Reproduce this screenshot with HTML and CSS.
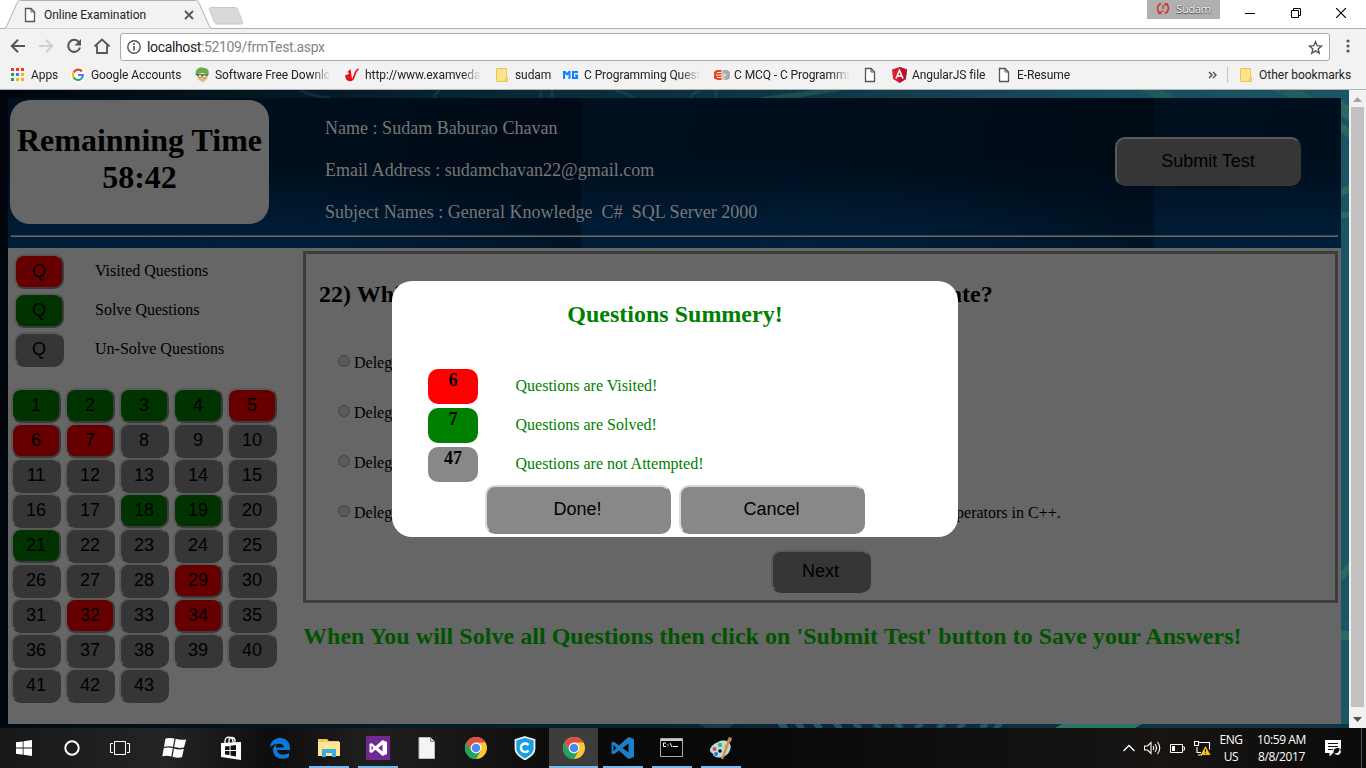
FILE: index.html
```html
<!DOCTYPE html>
<html lang="en">
<head>
<meta charset="utf-8">
<title>Online Examination</title>
<link rel="stylesheet" href="styles.css">
</head>
<body>
<svg class="defs" width="0" height="0" aria-hidden="true">
  <symbol id="doc" viewBox="0 0 12 16"><path d="M1.5 1.5h5.500l3.500 3.500v9.500h-9z" fill="#fff" stroke="#555" stroke-width="1.300"/><path d="M7 1.500v3.500h3.500" fill="none" stroke="#555"/></symbol>
  <symbol id="folder" viewBox="0 0 16 16"><path d="M1.500 1.500h10v9.500h1v3.500h-11z" fill="#ffe48c" stroke="#e9c552"/><path d="M10.500 14.500v-3h2" fill="none" stroke="#e9c552"/></symbol>
  <symbol id="chrome" viewBox="0 0 24 24"><circle cx="12" cy="12" r="11" fill="#fcc934"/><path d="M2.470 6.500A11 11 0 0 0 12 23l4.800-8.300L12 12 7.200 14.700z" fill="#1da462"/><path d="M12 6.500h9.530A11 11 0 0 0 2.470 6.500L7.200 14.700z" fill="#dd4f43"/><circle cx="12" cy="12" r="5.400" fill="#fff"/><circle cx="12" cy="12" r="4.300" fill="#4a8af4"/></symbol>
</svg>

<header class="browser">
  <div class="tabstrip">
    <svg class="tabshape" width="250" height="29" viewBox="0 0 250 29"><path d="M0 28.500h3.500q2.500 0 3.500-3L17 3q1-2.500 3.500-2.500h175q2.500 0 3.500 2.500l10 22.500q1 3 3.500 3H250" fill="#f2f2f2" stroke="#b0b0b0"/><path d="M210.500 7.500h25q1.500 0 2 1.500l5 13q.500 2-1.500 2h-24q-2 0-2.500-1.500l-5-13q-.500-2 1-2z" fill="#d9d9d9" stroke="#c8c8c8"/></svg>
    <div class="tab"><svg width="12" height="16"><use href="#doc"/></svg><span>Online Examination</span><svg class="close" width="10" height="10"><path d="M1 1l8 8M9 1l-8 8" stroke="#555" stroke-width="1.800"/></svg></div>
    <div class="profile"><svg width="14" height="13" viewBox="0 0 14 13"><path d="M5 1.500C.500 3 .500 9 4.500 11.500M9 1.500c4.500 1.500 4.500 7.500 0 10" fill="none" stroke="#c8382e" stroke-width="1.600"/><path d="M1.500 12h4V8.500zM12.500 1h-4v3.500z" fill="#c8382e"/><path d="M7 3v4M7 8.500v1.500" stroke="#c8382e" stroke-width="1.400"/></svg><span>Sudam</span></div>
    <div class="winctl">
      <svg width="10" height="10"><path d="M0 5.500h10" stroke="#000"/></svg>
      <svg width="10" height="10"><path d="M.500 2.500h7v7h-7zM2.500 2.500v-2h7v7h-2" fill="none" stroke="#000"/></svg>
      <svg width="10" height="10"><path d="M0 0l10 10M10 0L0 10" stroke="#000" stroke-width="1.200"/></svg>
    </div>
  </div>
  <div class="toolbar">
    <div class="nav">
      <svg width="16" height="16" viewBox="0 0 16 16"><path d="M15 8H2.500M8 1.800L1.800 8 8 14.200" fill="none" stroke="#555" stroke-width="2"/></svg>
      <svg width="16" height="16" viewBox="0 0 16 16"><path d="M1 8h12.500M8 1.800L14.200 8 8 14.200" fill="none" stroke="#d0d0d0" stroke-width="2"/></svg>
      <svg width="16" height="16" viewBox="0 0 16 16"><path d="M13 4.200A6 6 0 1 0 14 9.500" fill="none" stroke="#555" stroke-width="2"/><path d="M15 1v6.500H8.500z" fill="#555"/></svg>
      <svg class="home" width="18" height="16" viewBox="0 0 18 16"><path d="M1.500 8.500L9 1.500l7.500 7M4 7.500V15h10V7.500" fill="none" stroke="#555" stroke-width="1.800"/></svg>
    </div>
    <div class="omnibox">
      <svg width="14" height="14" viewBox="0 0 14 14"><circle cx="7" cy="7" r="6.200" fill="none" stroke="#555" stroke-width="1.400"/><path d="M7 6v4.500M7 3.200v1.700" stroke="#555" stroke-width="1.700"/></svg>
      <span class="url">localhost<i>:52109/frmTest.aspx</i></span>
      <svg class="star" width="15" height="15" viewBox="0 0 15 15"><path d="M7.500 1.700l1.700 4 4.300.400-3.300 2.800 1 4.300-3.700-2.300-3.700 2.300 1-4.300L1.500 6.100l4.300-.400z" fill="none" stroke="#555" stroke-width="1.400"/></svg>
    </div>
    <svg class="menu" width="4" height="14"><circle cx="2" cy="2" r="1.600" fill="#555"/><circle cx="2" cy="7" r="1.600" fill="#555"/><circle cx="2" cy="12" r="1.600" fill="#555"/></svg>
  </div>
  <div class="bookmarks">
    <div class="bm"><svg width="16" height="16" viewBox="0 0 16 16"><path d="M0 1h3v3H0z M5 1h3v3H5zM10 1h3v3h-3z" fill="#e8392b"/><path d="M0 6h3v3H0zM0 11h3v3H0z" fill="#2a9d4f"/><path d="M5 6h3v3H5z" fill="#3b7ded"/><path d="M10 6h3v3h-3zM5 11h3v3H5zM10 11h3v3h-3z" fill="#f6b60c"/></svg><span>Apps</span></div>
    <div class="bm"><svg width="16" height="16" viewBox="0 0 16 16"><circle cx="7" cy="8" r="7.500" fill="#fff"/><g fill="none" stroke-width="2.200"><path d="M11 4.500A5 5 0 0 0 2.600 5.500" stroke="#ea4335"/><path d="M2.600 5.500a5 5 0 0 0 0 5" stroke="#fbbc05"/><path d="M2.600 10.500a5 5 0 0 0 7.700 1.200" stroke="#34a853"/><path d="M10.300 11.700A5 5 0 0 0 12 8H7" stroke="#4285f4"/></g></svg><span>Google Accounts</span></div>
    <div class="bm"><svg width="16" height="16" viewBox="0 0 16 16"><path d="M2 8h11l-1 4-4 3.500L3.500 13z" fill="#f2b878"/><path d="M1 7C0 2 5-.500 9 1c4 0 6 4 4 7L8 6z" fill="#6fa84e"/><path d="M0 6.500l14 1-2 1.500H2z" fill="#4d7a42"/><circle cx="5" cy="9" r="1.500" fill="#fff" stroke="#4d7a42" stroke-width=".700"/><circle cx="9.500" cy="9.500" r="1.500" fill="#fff" stroke="#4d7a42" stroke-width=".700"/></svg><span>Software Free Downloads</span></div>
    <div class="bm"><svg width="16" height="16" viewBox="0 0 16 16"><path d="M5.500 2L2.500 5l2 1.500L0 8.500l1 3.500c2 3 6 3 6 0z" fill="#e8121a"/><path d="M5 13.500c6 0 3-9 8.500-11.500" fill="none" stroke="#e8121a" stroke-width="1.700"/></svg><span>http://www.examveda.com</span></div>
    <div class="bm"><svg width="16" height="16"><use href="#folder"/></svg><span>sudam</span></div>
    <div class="bm"><svg class="mg" width="16" height="16" viewBox="0 0 16 16"><path d="M1 12V5h1l2 2.500L6 5h.500v7M15 5H10v6h4V8.500h-2" fill="none" stroke="#0a84ff" stroke-width="2"/></svg><span>C Programming Questions</span></div>
    <div class="bm"><svg width="16" height="16" viewBox="0 0 16 16"><path d="M7.500 3H4a5 5 0 0 0 0 10h3.500z" fill="#e5481c"/><path d="M8.500 3H12a5 5 0 0 1 0 10H8.500z" fill="#aaa"/><path d="M2 8h5.500M3 5.500h4.500M3 10.500h4.500M10 8h3M10 6v7" stroke="#f3e4de"/></svg><span>C MCQ - C Programming</span></div>
    <div class="bm"><svg width="12" height="16"><use href="#doc"/></svg></div>
    <div class="bm"><svg width="16" height="16" viewBox="0 0 16 16"><path d="M7.500 0L15 2.600 13.800 12 7.500 16 1.200 12 0 2.600z" fill="#dd1b33"/><path d="M7.500 0L15 2.600 13.800 12 7.500 16z" fill="#b3122c"/><path d="M4 11.500L7.500 3.500l3.500 8M5.500 9h4" fill="none" stroke="#fff" stroke-width="1.600"/></svg><span>AngularJS file</span></div>
    <div class="bm"><svg width="16" height="16"><use href="#doc" width="12" height="16" x="1"/></svg><span>E-Resume</span></div>
    <div class="bmright"><svg width="9" height="8" viewBox="0 0 9 8"><path d="M1 1l3 3-3 3M5 1l3 3-3 3" fill="none" stroke="#555" stroke-width="1.500"/></svg><b></b><svg width="16" height="16"><use href="#folder"/></svg><span>Other bookmarks</span></div>
  </div>
</header>

<div class="viewport">
  <svg class="backdrop" width="1349" height="638">
    <g fill="none" stroke="#2b7580" stroke-opacity=".22">
      <path d="M300 0q10 6 30 8M440 0q-6 4-5 8M541 0v8M552 0v8M615 0q10 3 20 8M700 0q-8 4-10 8M716 0v8" stroke-width="3"/>
      <path d="M1341 82l8-1M1341 136l8 1M1341 534l8-1" stroke-width="2"/>
    </g>
    <path d="M755 8l60-8h30l-50 8zM1140 0h22l14 8h-20zM1270 0h30l14 8h-22z" fill="#246a58" fill-opacity=".5"/>
    <path d="M1341 10l8 6v15l-8-5zM1341 32l8 6v10l-8-6zM1341 98l8-3v8l-8 3zM1341 122h8v6h-8zM1341 482l8-10v12l-8 7zM1341 541h8v9h-8z" fill="#2d7260" fill-opacity=".75"/>
    <path d="M0 634h1349v4H0z" fill="#04131d" fill-opacity=".45"/>
    <path d="M780 638l6-4M798 638l4-4M816 638l4-4M836 638l4-4M856 638l3-4M876 638l2-4M898 638l2-4M920 638l-2-4M942 638l-2-4M962 638l-2-4M985 638l-2-4M1000 638l-4-4" stroke="#1d566a" stroke-width="8"/>
    <path d="M1055 638l7-4h80l-7 4z" fill="#2d7468"/><path d="M698 634h36l-5 4h-24z" fill="#163c4a"/>
  </svg>
  <main class="page">
    <section class="banner">
      <div class="banner-row">
        <h1 class="timer">Remainning Time<br>58:42</h1>
        <div class="person"><p>Name : Sudam Baburao Chavan</p><p>Email Address : sudamchavan22@gmail.com</p><p>Subject Names : General Knowledge&nbsp; C#&nbsp; SQL Server 2000</p></div>
        <button class="btn dim wide">Submit Test</button>
      </div>
      <div class="rule"></div>
    </section>
    <div class="body">
      <aside>
        <div class="legend">
          <button class="btn dim q red">Q</button><span>Visited Questions</span>
          <button class="btn dim q green">Q</button><span>Solve Questions</span>
          <button class="btn dim q">Q</button><span>Un-Solve Questions</span>
        </div>
        <div class="numbers">
          <button class="btn dim q green">1</button><button class="btn dim q green">2</button><button class="btn dim q green">3</button><button class="btn dim q green">4</button><button class="btn dim q red">5</button>
          <button class="btn dim q red">6</button><button class="btn dim q red">7</button><button class="btn dim q">8</button><button class="btn dim q">9</button><button class="btn dim q">10</button>
          <button class="btn dim q">11</button><button class="btn dim q">12</button><button class="btn dim q">13</button><button class="btn dim q">14</button><button class="btn dim q">15</button>
          <button class="btn dim q">16</button><button class="btn dim q">17</button><button class="btn dim q green">18</button><button class="btn dim q green">19</button><button class="btn dim q">20</button>
          <button class="btn dim q green">21</button><button class="btn dim q">22</button><button class="btn dim q">23</button><button class="btn dim q">24</button><button class="btn dim q">25</button>
          <button class="btn dim q">26</button><button class="btn dim q">27</button><button class="btn dim q">28</button><button class="btn dim q red">29</button><button class="btn dim q">30</button>
          <button class="btn dim q">31</button><button class="btn dim q red">32</button><button class="btn dim q">33</button><button class="btn dim q red">34</button><button class="btn dim q">35</button>
          <button class="btn dim q">36</button><button class="btn dim q">37</button><button class="btn dim q">38</button><button class="btn dim q">39</button><button class="btn dim q">40</button>
          <button class="btn dim q">41</button><button class="btn dim q">42</button><button class="btn dim q">43</button>
        </div>
      </aside>
      <section class="content">
        <div class="panel">
          <h2>22) Which of the following statements are correct about delegate?</h2>
          <div class="options">
            <label><i></i>Delegates are object oriented.</label>
            <label><i></i>Delegates are type-safe.</label>
            <label><i></i>Delegates can be used to call a static method.</label>
            <label><i></i>Delegates serve the same purpose as function pointers in C and pointers to member function operators in C++.</label>
          </div>
          <button class="btn dim next">Next</button>
        </div>
        <h2 class="hint">When You will Solve all Questions then click on 'Submit Test' button to Save your Answers!</h2>
      </section>
    </div>
  </main>
  <div class="scroll"><svg width="9" height="5"><path d="M0 5l4.500-5L9 5z" fill="#a3a3a3"/></svg><div class="thumb"></div><svg width="9" height="5"><path d="M0 0l4.500 5L9 0z" fill="#505050"/></svg></div>
  <div class="modal">
    <h2>Questions Summery!</h2>
    <div class="summary">
      <b class="red">6</b><span>Questions are Visited!</span>
      <b class="green">7</b><span>Questions are Solved!</span>
      <b>47</b><span>Questions are not Attempted!</span>
    </div>
    <div class="actions"><button class="btn wide">Done!</button><button class="btn wide">Cancel</button></div>
  </div>
</div>

<footer class="taskbar">
  <div class="cell sys"><svg width="16" height="16" viewBox="0 0 16 16"><path d="M0 2.300L6.700 1.400V7.600H0zM7.500 1.300L16 0v7.600H7.500zM0 8.400h6.700v6.300L0 13.700zM7.500 8.400H16V16l-8.500-1.200z" fill="#fff"/></svg></div>
  <div class="cell sys"><svg width="16" height="16"><circle cx="8" cy="8" r="6.700" fill="none" stroke="#fff" stroke-width="2"/></svg></div>
  <div class="cell sys"><svg width="20" height="14"><path d="M4.500.500h11v13h-11zM3 2.500H.500v9H3M17 2.500h2.500v9H17" fill="none" stroke="#fff"/></svg></div>
  <div class="cell flag"><svg width="26" height="22" viewBox="0 0 26 22"><path d="M4.500 1.500q4-1 9 0l-1.500 8.300q-4-1-9 0zM14.700 1.800q4 1.500 10.500.700L23 10.500q-5 1-9.800-.400zM2.800 11q4-1 9 0l-1.500 8.500q-4-1.500-9-.300zM13 11.500q4 1.500 9.800.500L21 20.300q-5 1-9.500-.500z" fill="#fff"/></svg></div>
  <div class="cell"><svg width="22" height="24" viewBox="0 0 22 24"><path d="M5 8V5c0-5 7-5 8 0v2M9 7V4c1-4 6-3 6 1v3" fill="none" stroke="#fff" stroke-width="1.300"/><path d="M1 7l20-1v18L1 21z" fill="#fff"/><path d="M5 10.500l4.500-.600v4H5zM10.500 9.800l5.500-.800v5h-5.500zM5 15h4.500v4L5 18.500zM10.500 15H16v5.500l-5.500-.900z" fill="#111"/></svg></div>
  <div class="cell"><svg width="22" height="22" viewBox="0 0 22 22"><path d="M1 10C2 3.500 6.500 1 11 1c6 0 10 4 10 10v2H8c.500 5 7 6 12 3v4c-7 4-16 1-16-7 0-3 2-5 5-6-2 1.500-2 2.500-2 3.500h8c0-5-8-5-14-.500z" fill="#0b79d8"/></svg></div>
  <div class="cell open"><svg width="22" height="18" viewBox="0 0 22 18"><path d="M0 0h9l2 2h10v15H0z" fill="#f4c85c"/><path d="M0 3h22v14H0z" fill="#ffe594"/><path d="M4 18V10h14v8h-4v-4H8v4z" fill="#35aee8"/></svg></div>
  <div class="cell open"><svg width="24" height="24" viewBox="0 0 24 24"><path d="M0 0h24v24H0z" fill="#6e2a91"/><path fill-rule="evenodd" d="M16.500 4L21 6v12l-4.500 2-7-6.200L5.500 17 3.500 16V8l2-1 4 3.200zM16.500 8.500L12.300 12l4.200 3.500zM5.500 9.800v4.400L7.500 12z" fill="#fff"/></svg></div>
  <div class="cell"><svg width="18" height="22" viewBox="0 0 18 22"><path d="M1 .500h11.500l4 4V21.500H1z" fill="#f4f4f4" stroke="#bbb"/><path d="M12.500.500v4h4" fill="#ccc" stroke="#888"/></svg></div>
  <div class="cell"><svg width="24" height="24"><use href="#chrome"/></svg></div>
  <div class="cell"><svg width="22" height="24" viewBox="0 0 22 24"><path d="M11 1l9.500 3v9c0 5-5 8-9.500 10.500C6.500 21 1.500 18 1.500 13V4z" fill="#18a0e0" stroke="#e8eef2" stroke-width="1.800"/><path d="M14.500 9A4.300 4.300 0 1 0 14.500 14.500" fill="none" stroke="#fff" stroke-width="2.400"/></svg></div>
  <div class="cell open active"><svg width="24" height="24"><use href="#chrome"/></svg></div>
  <div class="cell open"><svg width="24" height="24" viewBox="0 0 24 24"><path fill-rule="evenodd" d="M17.500 1L23 3v18l-5.500 2L8 14.500 2.500 18.500.500 17.300V6.700l2-1.200L8 9.500zM17.500 7.500L11.500 12l6 4.500zM2.500 9v6L5.500 12z" fill="#1b80c9"/></svg></div>
  <div class="cell open"><svg width="24" height="20" viewBox="0 0 24 20"><path d="M.500.500h22v18h-22z" fill="#050505" stroke="#aaa"/><path d="M1 2h21" stroke="#ccc" stroke-width="2"/><path d="M6 5H3.500v3.500H6M8 6v.800M8 7.700v.800M10 5l2 4M13 8.500h5" fill="none" stroke="#fff"/></svg></div>
  <div class="cell open"><svg width="24" height="24" viewBox="0 0 24 24"><path d="M9 6c8-4 15 1 12 8-2 6-9 9-14 7-4-1-2-3-4-4-5-2 0-9 6-11z" fill="#b4dcf0"/><circle cx="11" cy="9" r="2.200" fill="#56b544"/><circle cx="5.500" cy="13" r="2" fill="#e64a32"/><circle cx="17" cy="10" r="2" fill="#f4ba28"/><circle cx="11" cy="15" r="1.800" fill="#111"/><circle cx="7" cy="18" r="2" fill="#356fc5"/><path d="M20 5l-7 18" stroke="#e58c25" stroke-width="2.300"/><path d="M18 5l2-4 3 1-1 4z" fill="#bb8a57"/></svg></div>
  <div class="tray">
    <svg width="12" height="8"><path d="M.500 7L6 1.500 11.500 7" fill="none" stroke="#fff" stroke-width="1.300"/></svg>
    <svg width="17" height="14" viewBox="0 0 17 14"><path d="M.500 5v4h3L7 12.500v-11L3.500 5zM9 5q1.500 2 0 4M11 3q3 4 0 8M13.500 1q4.500 6 0 12" fill="none" stroke="#fff" stroke-width="1.100"/></svg>
    <svg width="15" height="10"><path d="M.500 1.500h12v8h-12zM13 4h1.500v3H13" fill="none" stroke="#fff"/><path d="M2 3h3v5H2z" fill="#fff"/></svg>
    <svg width="17" height="15" viewBox="0 0 17 15"><path d="M5 1.500h10.500v7M3 6v5.500h4M.500.500h4v4h-4zM4 14h4" fill="none" stroke="#fff" stroke-width="1.100"/><path d="M11.500 5L16.500 14h-10z" fill="#f8bd19"/><path d="M11.500 8v3M11.500 12v1" stroke="#222"/></svg>
  </div>
  <div class="lang">ENG<br>US</div>
  <div class="clock">10:59 AM<br>8/8/2017</div>
  <svg class="note" width="17" height="17" viewBox="0 0 17 17"><path d="M0 0h16v13H8l-3.500 3.500V13H0z" fill="#fff"/><path d="M3 3.500h10M3 6.500h10M3 9.500h5" stroke="#111"/><circle cx="12.500" cy="12" r="4" fill="#111"/><path d="M14.500 9a3.300 3.300 0 1 1-5 4c3 1 5-1 5-4z" fill="#fff"/></svg>
  <div class="peek"></div>
</footer>
</body>
</html>
```
FILE: styles.css
```css
* { box-sizing: border-box; }
body { margin: 0; width: 1366px; height: 768px; overflow: hidden; font-family: "Liberation Serif", serif; color: #000; }
svg { display: block; flex: none; }
.defs { position: absolute; }
h1, h2, p { margin: 0; }

/* browser frame */
.browser { height: 90px; background: #f2f2f2; border-bottom: 1px solid #b2b2b2; font: 12px Roboto, sans-serif; color: #222; }
.tabstrip { height: 29px; background: #fff; border-bottom: 1px solid #b0b0b0; display: flex; position: relative; }
.tabshape { position: absolute; left: 0; top: 0; }
.tab { position: relative; display: flex; align-items: center; width: 206px; padding: 1px 0 0 24px; letter-spacing: -.05px; }
.tab span { margin-left: 8px; flex: 1; }
.close { margin-right: 12px; }
.profile { margin-left: auto; display: flex; gap: 6px; align-items: center; width: 73px; height: 19px; padding: 0 9px 2px; background: #b0b0b0; position: relative; color: #fff; text-shadow: 0 0 1px #333, 0 1px 1px #444; font: 11.5px "Open Sans", sans-serif; letter-spacing: -.55px; }
.winctl { width: 146px; display: flex; gap: 36px; padding: 8px 0 0 25px; }
.winctl svg + svg { margin-left: -.5px; }
.toolbar { height: 32px; display: flex; align-items: center; padding: 2px 0 0 10px; }
.nav { width: 110px; display: flex; gap: 12px; align-items: center; }
.nav .home { margin-left: -1px; }
.omnibox { width: 1210px; height: 28px; border: 1px solid #a9a9a9; border-radius: 3px; background: #fff; display: flex; align-items: center; padding: 0 6px; margin-top: 2px; }
.url { margin-left: 6px; flex: 1; font-size: 14px; letter-spacing: -.36px; }
.url i { font-style: normal; color: #858585; }
.menu { margin-left: 16px; }
.bookmarks { height: 28px; padding: 0 0 1px 11px; display: grid; align-items: center; grid-template-columns: 60px 124px 150px 150px 69px 150px 150px 28px 105px 211px 1fr; letter-spacing: -.08px; }
.bm { display: flex; gap: 4px; align-items: center; }
.bm span { max-width: 116px; overflow: hidden; white-space: nowrap; -webkit-mask-image: linear-gradient(90deg, #000 0 97px, transparent 116px); mask-image: linear-gradient(90deg, #000 0 97px, transparent 116px); }
.bm .mg { margin-left: -1px; margin-right: 1px; }
.bmright { display: flex; align-items: center; letter-spacing: 0; }
.bmright b { height: 16px; border-left: 1px solid #c3c3c3; margin: 0 11px 0 10px; }
.bmright span { margin-left: 4px; white-space: nowrap; }

/* page */
.viewport { position: relative; height: 638px; display: flex; background: linear-gradient(90deg, #00060b, #041722 20%, #092b3b 40%, #12394a 62%, #174c5b 80%, #1c5565); }
.backdrop { position: absolute; left: 0; top: 0; }
.page { position: relative; width: 1349px; padding: 8px 8px 4px; }
.banner { height: 150px; padding: 2px; background-image: linear-gradient(14deg, rgba(0, 38, 70, .3) 5%, transparent 26%), radial-gradient(ellipse 330px 90px at 42% 108%, rgba(0, 38, 72, .65), transparent), linear-gradient(180deg, transparent 40%, rgba(0, 30, 58, .5)), linear-gradient(100deg, #00101f, #000e1c 50%, #000a14); background-size: 573px 150px; }
.banner-row { display: flex; height: 134px; }
.timer { width: 259px; height: 124px; background: #666; border-radius: 20px; font-size: 32px; line-height: 37px; padding-top: 22px; text-align: center; white-space: nowrap; }
.person { padding: 18px 0 0 56px; width: 846px; color: #777; font-size: 18px; line-height: 21px; letter-spacing: .02px; }
.person p { margin-bottom: 21px; }
.rule { height: 2px; margin: 1px 1px 0; background: #666; border-top: 1px solid #454545; }
.body { height: 476px; background: #666; display: flex; }
aside { width: 295px; padding: 6px 0 0 3px; }
.legend { display: grid; grid-template-columns: 50px 1fr; grid-auto-rows: 35px; row-gap: 4px; column-gap: 31px; padding-left: 3px; font-size: 16px; align-items: center; }
.legend span { line-height: 18px; padding-bottom: 2px; }
.numbers { margin-top: 21px; display: grid; grid-template-columns: repeat(5, 50px); grid-auto-rows: 35px; column-gap: 4px; }

.btn { font: 18px "Liberation Sans", sans-serif; color: #000; background: #888; border: 2px solid #888; border-top-color: #dadada; border-left-color: #dadada; border-radius: 10px; padding: 0; margin: 0; }
.btn.dim { background: #363636; border-color: #5a5a5a #363636 #363636 #5a5a5a; }
.btn.dim.red { background: #600; border-color: #5a5a5a #3b3b3b #3b3b3b #5a5a5a; }
.btn.dim.green { background: #030; border-color: #5a5a5a #3b3b3b #3b3b3b #5a5a5a; }
.q { width: 50px; height: 35px; }
.wide { width: 186px; height: 49px; }
.banner-row .wide { margin-top: 37px; flex: none; }
.actions .wide { padding: 0 1px 0 0; }
.content { padding-top: 3px; width: 1035px; }
.panel { height: 352px; border: 3px solid #3d3d3d; padding: 26px 13px 0; }
.panel h2 { font-size: 24px; line-height: 28px; white-space: nowrap; letter-spacing: .06px; }
.options { padding: 46px 0 0 19px; }
.options label { display: flex; align-items: center; height: 18px; margin-bottom: 32px; font-size: 16px; white-space: nowrap; }
.options i { width: 12px; height: 12px; border: 1px solid #444; border-radius: 50%; background: #5a5a5a; margin: -4px 4px 0 0; }
.next { display: block; width: 100px; height: 43px; margin: -4px auto 0; }
.hint { margin-top: 19px; font-size: 24px; line-height: 28px; color: #005400; white-space: nowrap; letter-spacing: .034px; }
.scroll { position: relative; width: 17px; background: #f1f1f1; display: flex; flex-direction: column; align-items: center; padding: 7px 0 6px; }
.thumb { width: 13px; height: 600px; margin: 5px 0 auto; background: #c1c1c1; }

/* summary dialog over the page */
.modal { position: absolute; left: 392px; top: 191px; width: 566px; height: 256px; background: #fff; border-radius: 20px; padding-top: 19px; color: green; }
.modal h2 { text-align: center; font-size: 24px; line-height: 28px; }
.summary { display: grid; grid-template-columns: 50px 1fr; grid-auto-rows: 35px; row-gap: 4px; column-gap: 37.500px; padding: 41px 0 0 36px; font-size: 16px; align-items: center; }
.summary span { padding-bottom: 1px; }
.summary b { height: 35px; border-radius: 10px; background: #888; color: #000; text-align: center; font-size: 18px; line-height: 23px; }
.summary .red { background: red; }
.summary .green { background: green; }
.actions { display: flex; gap: 8px; padding: 3px 0 0 93px; }

/* taskbar */
.taskbar { height: 40px; display: flex; color: #fff; background: linear-gradient(90deg, #181818, #242424 12%, #0d0d0d 20%, #202020 27%, #0a0a0a 42%, #080808 53%, #111 75%, #171412 85%, #0c0b0a); font: 12px "Open Sans", sans-serif; }
.cell { width: 49px; display: flex; align-items: center; justify-content: center; }
.sys { width: 48px; }
.flag { width: 60px; margin-right: 2px; }
.open { background: linear-gradient(#76b9ed, #76b9ed) 50% 100% / 40px 2px no-repeat; }
.active { background: linear-gradient(#76b9ed, #76b9ed) 0 100% / 100% 2px no-repeat, #3d3d3d; }
.tray { margin-left: auto; width: 96px; display: flex; gap: 9px; align-items: center; }
.lang, .clock { text-align: center; line-height: 17px; padding-top: 3px; letter-spacing: -.4px; white-space: nowrap; }
.lang { width: 24px; }
.clock { width: 77px; margin-right: 5px; }
.note { margin: 12px 0 0; }
.peek { width: 5px; margin-left: 19px; border-left: 1px solid #555; }
```
